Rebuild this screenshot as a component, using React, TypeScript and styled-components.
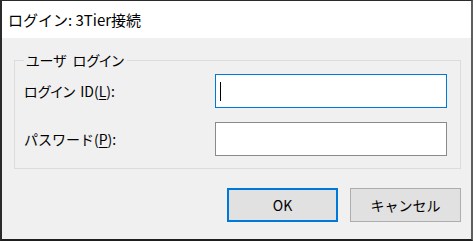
import React from "react";
import styled, { createGlobalStyle } from "styled-components";

const Global = createGlobalStyle`
  html, body { margin: 0; padding: 0; background: #ffffff; }
  body { font-family: "Noto Sans CJK JP", "Noto Sans", sans-serif; color: #000; }
  * { box-sizing: border-box; }
`;

const Window = styled.div`
  width: 473px;
  height: 241px;
  display: flex;
  flex-direction: column;
  border-left: 2px solid #2a2a2a;
  border-top: 1px solid #2a2a2a;
  border-bottom: 2px solid #1e1e1e;
  border-right: 2px solid #5e5e5e;
  background: #f0f0f0;
`;

const TitleBar = styled.div`
  height: 37px;
  flex: none;
  background: #ffffff;
  display: flex;
  align-items: center;
  padding-left: 6px;
  font-size: 15px;
  line-height: 1;
  color: #000;
`;

const Body = styled.div`
  flex: 1;
  display: flex;
  flex-direction: column;
  padding: 12px 10px 0 12px;
`;

const Group = styled.fieldset`
  margin: 0;
  border: 1px solid #dcdcdc;
  padding: 4px 0 12px 9px;
  min-width: 0;
`;

const Legend = styled.legend`
  font-size: 14px;
  line-height: 20px;
  padding: 0 3px 0 2px;
  color: #000;
  font-feature-settings: "palt";
  word-spacing: 3px;
`;

const Form = styled.div`
  display: grid;
  grid-template-columns: 191px 232px;
  grid-auto-rows: 34px;
  row-gap: 14px;
  align-items: center;
`;

const Label = styled.label<{ $proportional?: boolean }>`
  font-size: 14px;
  line-height: 1;
  color: #000;
  font-feature-settings: ${(p) => (p.$proportional ? '"palt"' : "normal")};
  word-spacing: 2px;
`;

const Mnemonic = styled.span`
  text-decoration: underline;
  text-underline-offset: 2px;
`;

const TextBox = styled.div<{ $focused?: boolean }>`
  height: 34px;
  background: #ffffff;
  border: 1px solid ${(p) => (p.$focused ? "#0078d7" : "#8a8a8a")};
  display: flex;
  align-items: center;
  padding-left: 4px;
`;

const Caret = styled.span`
  width: 1px;
  height: 19px;
  background: #000;
`;

const Buttons = styled.div`
  display: flex;
  justify-content: flex-end;
  gap: 12px;
  margin-top: 19px;
`;

const Button = styled.div<{ $default?: boolean }>`
  width: 111px;
  height: 34px;
  display: flex;
  align-items: center;
  justify-content: center;
  background: #e1e1e1;
  border: ${(p) => (p.$default ? "2px solid #0078d7" : "1px solid #adadad")};
  font-size: 14px;
  line-height: 1;
  color: #000;
`;

export default function App() {
  return (
    <>
      <Global />
      <Window>
        <TitleBar>ログイン: 3Tier接続</TitleBar>
        <Body>
          <Group>
            <Legend>ユーザ ログイン</Legend>
            <Form>
              <Label $proportional>
                ログイン ID(<Mnemonic>L</Mnemonic>):
              </Label>
              <TextBox $focused>
                <Caret />
              </TextBox>
              <Label>
                パスワード(<Mnemonic>P</Mnemonic>):
              </Label>
              <TextBox />
            </Form>
          </Group>
          <Buttons>
            <Button $default>OK</Button>
            <Button>キャンセル</Button>
          </Buttons>
        </Body>
      </Window>
    </>
  );
}
